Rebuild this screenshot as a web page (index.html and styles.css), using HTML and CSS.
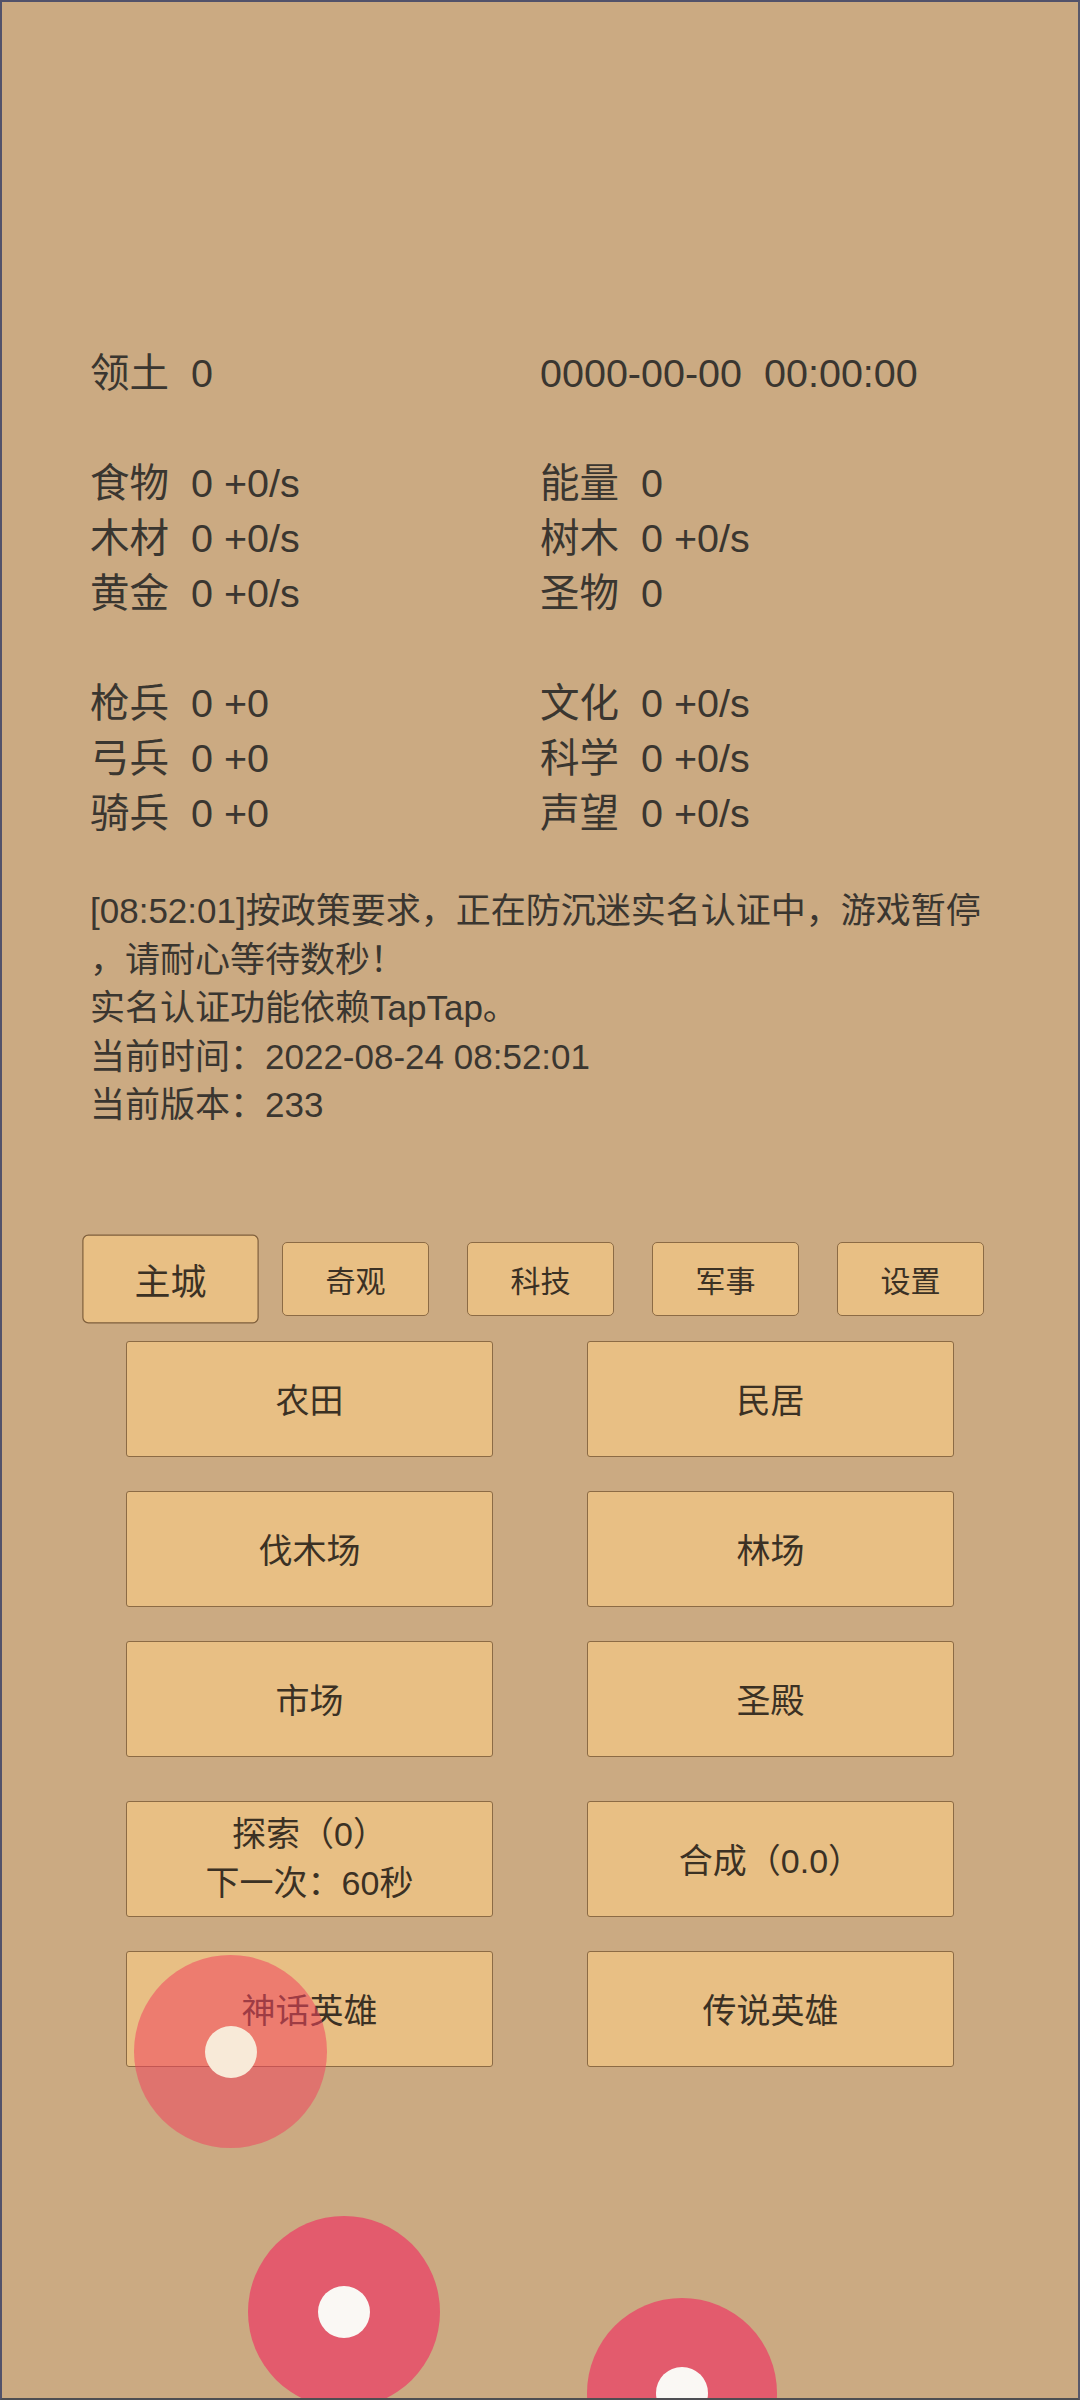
FILE: index.html
```html
<!DOCTYPE html>
<html lang="zh-CN">
<head>
<meta charset="utf-8">
<title>主城</title>
<link rel="stylesheet" href="styles.css">
</head>
<body>
<div class="screen">
  <div class="stats">
    <div class="group">
      <div class="stat"><span class="label">领土</span><span>0</span></div>
      <div class="stat">0000-00-00&nbsp;&nbsp;00:00:00</div>
    </div>
    <div class="group">
      <div class="stat"><span class="label">食物</span><span>0 +0/s</span></div>
      <div class="stat"><span class="label">能量</span><span>0</span></div>
      <div class="stat"><span class="label">木材</span><span>0 +0/s</span></div>
      <div class="stat"><span class="label">树木</span><span>0 +0/s</span></div>
      <div class="stat"><span class="label">黄金</span><span>0 +0/s</span></div>
      <div class="stat"><span class="label">圣物</span><span>0</span></div>
    </div>
    <div class="group">
      <div class="stat"><span class="label">枪兵</span><span>0 +0</span></div>
      <div class="stat"><span class="label">文化</span><span>0 +0/s</span></div>
      <div class="stat"><span class="label">弓兵</span><span>0 +0</span></div>
      <div class="stat"><span class="label">科学</span><span>0 +0/s</span></div>
      <div class="stat"><span class="label">骑兵</span><span>0 +0</span></div>
      <div class="stat"><span class="label">声望</span><span>0 +0/s</span></div>
    </div>
  </div>

  <div class="message">
    <div class="line">[08:52:01]按政策要求，正在防沉迷实名认证中，游戏暂停</div>
    <div class="line">，请耐心等待数秒！</div>
    <div class="line">实名认证功能依赖TapTap。</div>
    <div class="line">当前时间：2022-08-24 08:52:01</div>
    <div class="line">当前版本：233</div>
  </div>

  <div class="tabs">
    <div class="tab selected">主城</div>
    <div class="tab">奇观</div>
    <div class="tab">科技</div>
    <div class="tab">军事</div>
    <div class="tab">设置</div>
  </div>

  <div class="grid">
    <div class="btn">农田</div>
    <div class="btn">民居</div>
    <div class="btn">伐木场</div>
    <div class="btn">林场</div>
    <div class="btn">市场</div>
    <div class="btn">圣殿</div>
  </div>

  <div class="grid second">
    <div class="btn two-line"><span>探索（0）</span><span>下一次：60秒</span></div>
    <div class="btn">合成（0.0）</div>
    <div class="btn">神话英雄</div>
    <div class="btn">传说英雄</div>
  </div>

  <div class="touch faded t1"><div class="dot cream"></div></div>
  <div class="touch t2"><div class="dot"></div></div>
  <div class="touch t3"><div class="dot"></div></div>
</div>
</body>
</html>
```

FILE: styles.css
```css
* { box-sizing: border-box; }

html, body {
  margin: 0;
  padding: 0;
}

body {
  font-family: "Liberation Sans", "Noto Sans CJK SC", sans-serif;
  color: #3a3630;
}

.screen {
  position: relative;
  width: 1080px;
  height: 2400px;
  overflow: hidden;
  background: #cbaa82;
  border: 2px solid #52526a;
  border-bottom-color: #4e4e52;
  border-right-color: #58586a;
}

/* stats */
.stats {
  padding: 344px 0 0 88px;
}

.group {
  display: grid;
  grid-template-columns: 450px 450px;
  font-size: 39.5px;
  line-height: 55px;
  margin-bottom: 55px;
  white-space: nowrap;
}

.group:last-child { margin-bottom: 0; }

.stat { display: flex; }

.label {
  display: inline-block;
  width: 101px;
}

/* message */
.message {
  margin-top: 46px;
  padding-left: 88px;
  font-size: 35px;
  line-height: 48.5px;
  white-space: nowrap;
}

/* tabs */
.tabs {
  display: flex;
  gap: 38px;
  margin-top: 112px;
  padding-left: 95px;
}

.tab {
  width: 147px;
  height: 74px;
  display: flex;
  align-items: center;
  justify-content: center;
  background: #e8bf84;
  border: 1.5px solid #8c6b45;
  border-radius: 5px;
  font-size: 30px;
  color: #3b3124;
}

.tab.selected {
  transform: scale(1.2);
  border-color: #7f5f3c;
}

/* buttons */
.grid {
  display: grid;
  grid-template-columns: 367px 367px;
  grid-auto-rows: 116px;
  column-gap: 94px;
  row-gap: 34px;
  margin-top: 25px;
  padding-left: 124px;
}

.grid.second { margin-top: 44px; }

.btn {
  display: flex;
  flex-direction: column;
  align-items: center;
  justify-content: center;
  background: #e8bf84;
  border: 1.5px solid #8c6b45;
  border-radius: 3px;
  font-size: 34px;
  color: #3b3124;
}

.btn.two-line { line-height: 49px; }

/* touch indicators overlay */
.touch {
  position: absolute;
  border-radius: 50%;
  background: #e35b6d;
  display: flex;
  align-items: center;
  justify-content: center;
}

.touch.faded { background: rgba(240, 70, 95, 0.55); }

.t1 { left: 132px; top: 1953px; width: 193px; height: 193px; }
.t2 { left: 246px; top: 2214px; width: 192px; height: 192px; }
.t3 { left: 585px; top: 2296px; width: 190px; height: 190px; }

.dot {
  width: 52px;
  height: 52px;
  border-radius: 50%;
  background: #faf8f4;
}

.dot.cream { background: #f8ead8; }
```
